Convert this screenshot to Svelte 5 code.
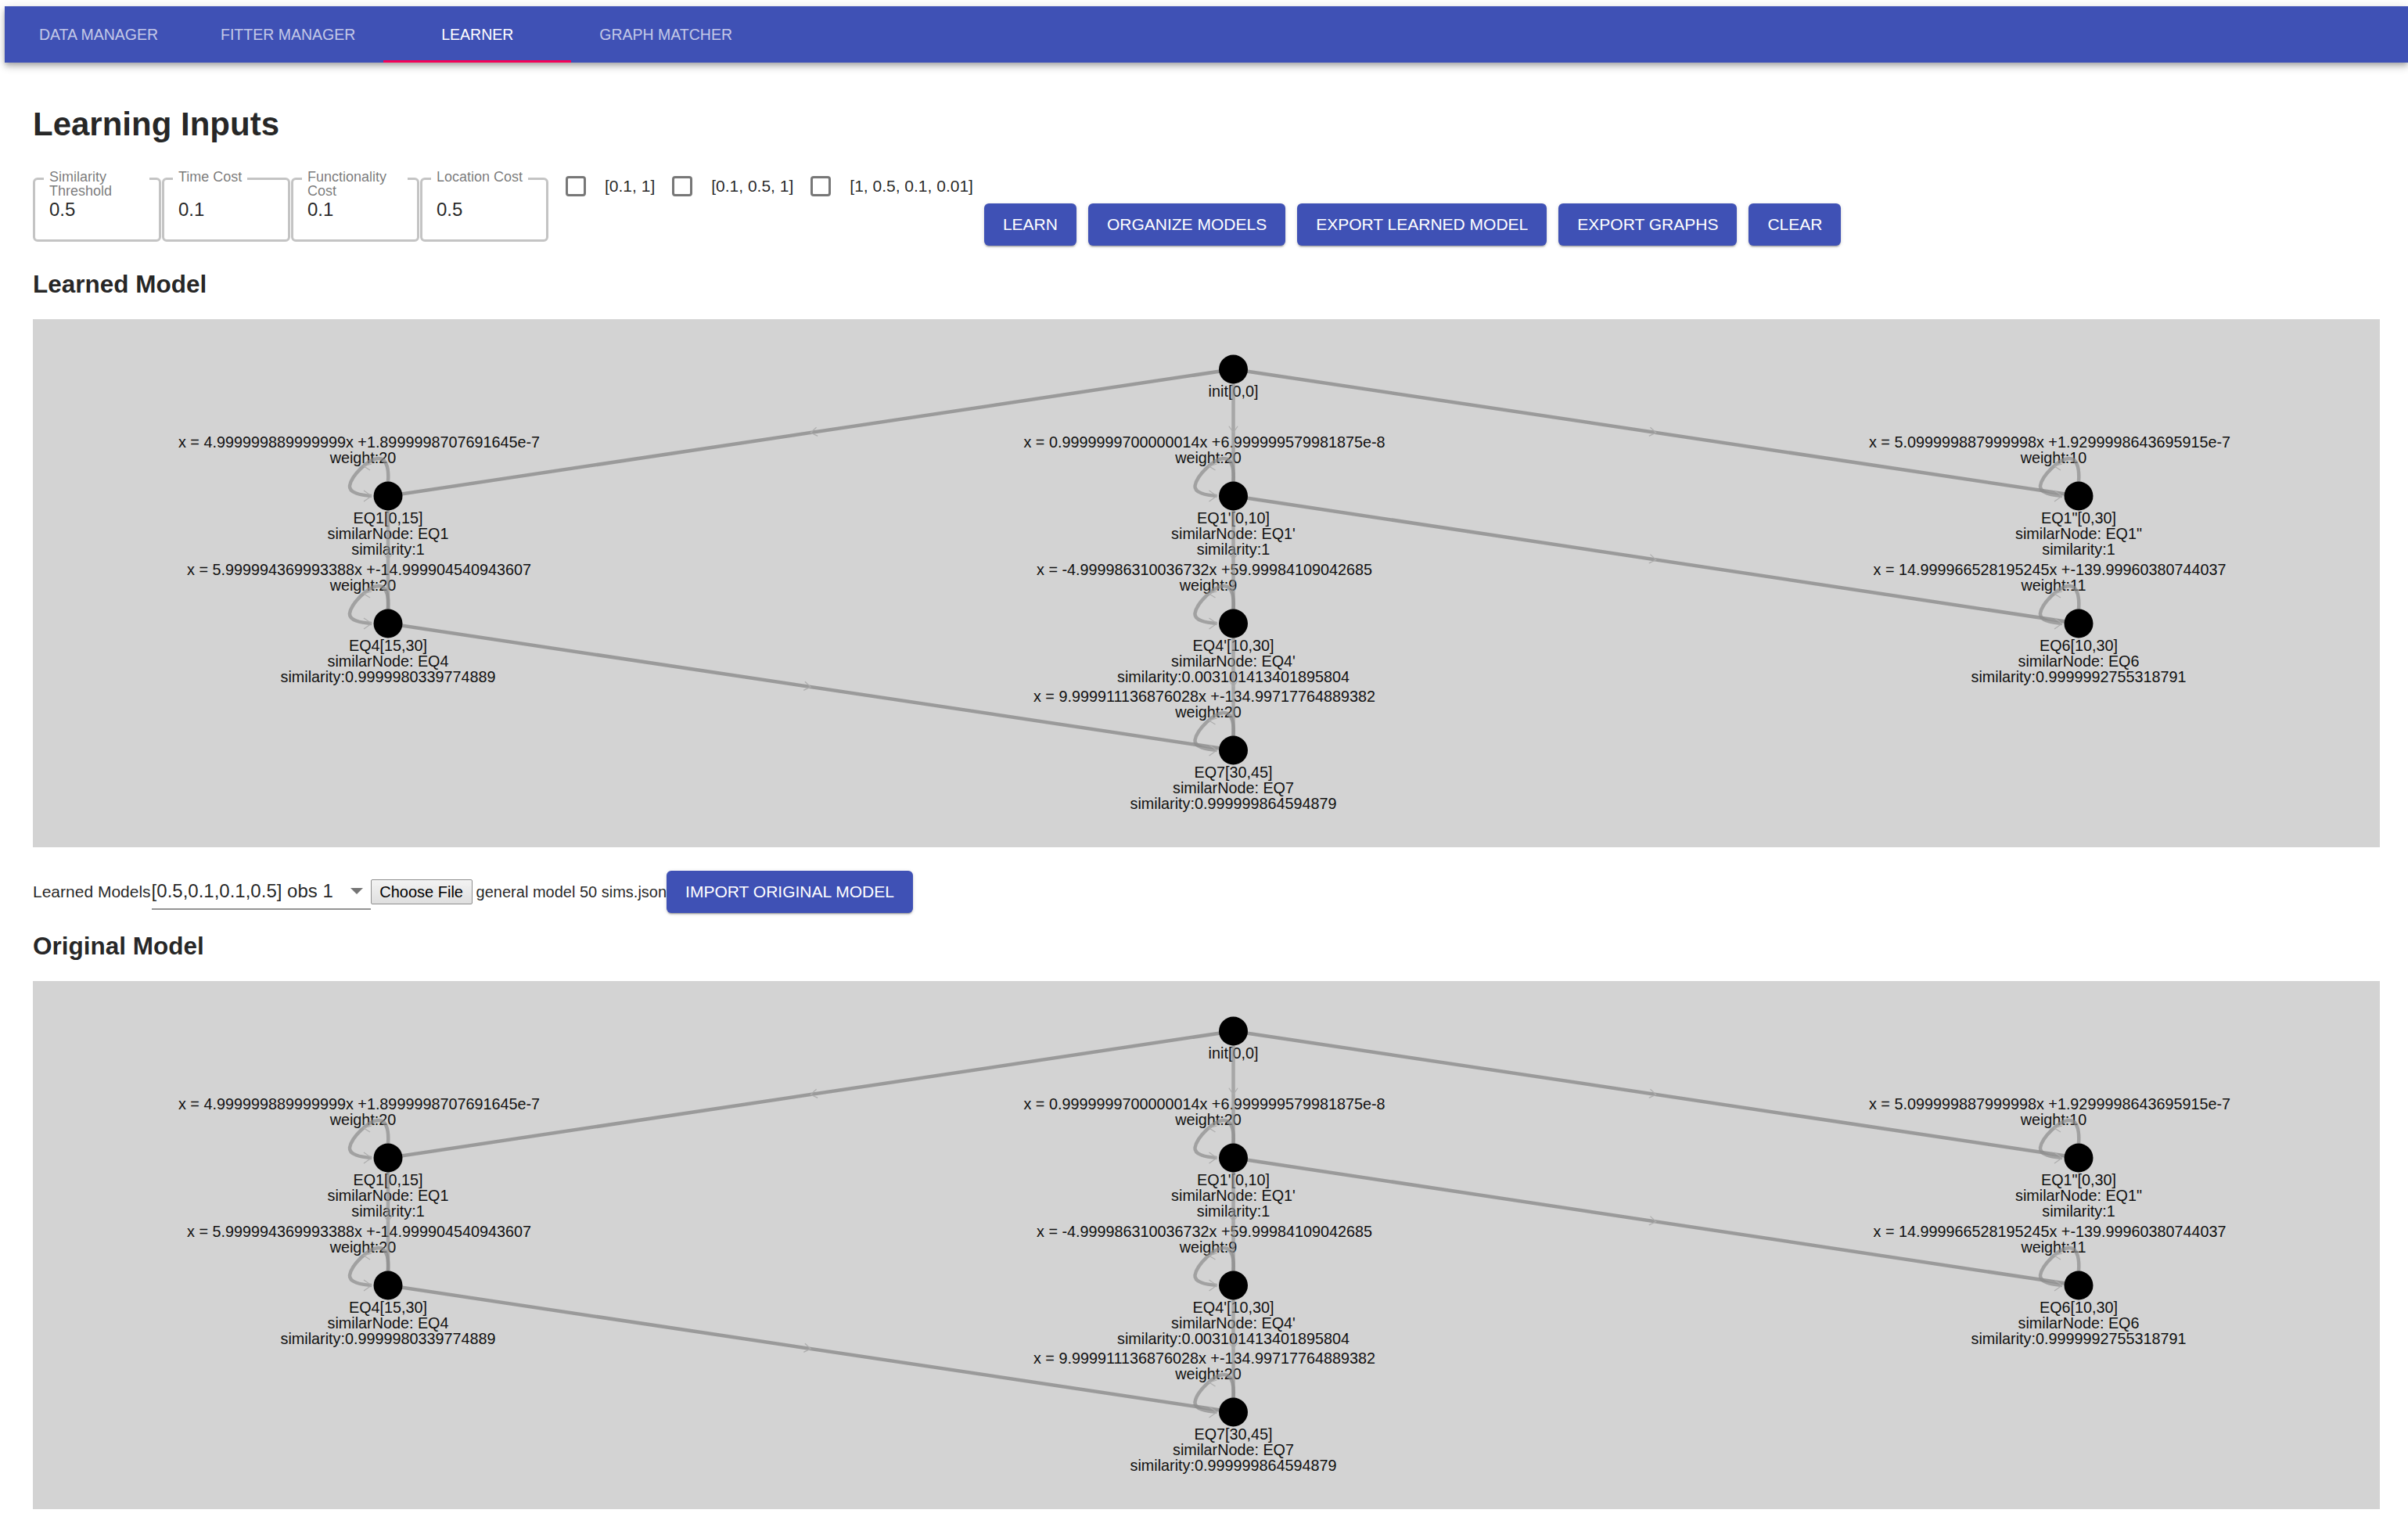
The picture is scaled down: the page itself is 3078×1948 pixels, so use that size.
<script>
  const tabs = [
    { label: 'DATA MANAGER' },
    { label: 'FITTER MANAGER' },
    { label: 'LEARNER', active: true },
    { label: 'GRAPH MATCHER' }
  ];

  const fields = [
    { label: 'Similarity Threshold', value: '0.5' },
    { label: 'Time Cost', value: '0.1' },
    { label: 'Functionality Cost', value: '0.1' },
    { label: 'Location Cost', value: '0.5' }
  ];

  const checks = ['[0.1, 1]', '[0.1, 0.5, 1]', '[1, 0.5, 0.1, 0.01]'];
  const actions = ['LEARN', 'ORGANIZE MODELS', 'EXPORT LEARNED MODEL', 'EXPORT GRAPHS', 'CLEAR'];

  const colX = [454, 1534.5, 2615];
  const rowY = [64, 226, 389, 551];

  const nodes = [
    { id: 'init', x: colX[1], y: rowY[0], lines: ['init[0,0]'] },
    {
      id: 'eq1', x: colX[0], y: rowY[1],
      eq: 'x = 4.999999889999999x +1.8999998707691645e-7', weight: 20,
      lines: ['EQ1[0,15]', 'similarNode: EQ1', 'similarity:1']
    },
    {
      id: 'eq1p', x: colX[1], y: rowY[1],
      eq: 'x = 0.9999999700000014x +6.999999579981875e-8', weight: 20,
      lines: ["EQ1'[0,10]", "similarNode: EQ1'", 'similarity:1']
    },
    {
      id: 'eq1pp', x: colX[2], y: rowY[1],
      eq: 'x = 5.099999887999998x +1.9299998643695915e-7', weight: 10,
      lines: ['EQ1"[0,30]', 'similarNode: EQ1"', 'similarity:1']
    },
    {
      id: 'eq4', x: colX[0], y: rowY[2],
      eq: 'x = 5.999994369993388x +-14.999904540943607', weight: 20,
      lines: ['EQ4[15,30]', 'similarNode: EQ4', 'similarity:0.9999980339774889']
    },
    {
      id: 'eq4p', x: colX[1], y: rowY[2],
      eq: 'x = -4.999986310036732x +59.99984109042685', weight: 9,
      lines: ["EQ4'[10,30]", "similarNode: EQ4'", 'similarity:0.003101413401895804']
    },
    {
      id: 'eq6', x: colX[2], y: rowY[2],
      eq: 'x = 14.999966528195245x +-139.99960380744037', weight: 11,
      lines: ['EQ6[10,30]', 'similarNode: EQ6', 'similarity:0.9999992755318791']
    },
    {
      id: 'eq7', x: colX[1], y: rowY[3],
      eq: 'x = 9.999911136876028x +-134.99717764889382', weight: 20,
      lines: ['EQ7[30,45]', 'similarNode: EQ7', 'similarity:0.999999864594879']
    }
  ];

  const byId = Object.fromEntries(nodes.map((n) => [n.id, n]));
  const links = [
    ['init', 'eq1'], ['init', 'eq1p'], ['init', 'eq1pp'],
    ['eq1', 'eq4'], ['eq1p', 'eq4p'], ['eq1p', 'eq6'],
    ['eq4', 'eq7'], ['eq4p', 'eq7']
  ].map(([a, b]) => ({ from: byId[a], to: byId[b] }));

  const loop = 'M0,-18 C1,-30 0,-48 -12,-48 C-25,-48 -47,-26 -49,-13 C-50,-4 -35,-1 -21,0';

  // small open arrowhead at the middle of an edge
  function midHead({ from, to }) {
    const x = (from.x + to.x) / 2;
    const y = (from.y + to.y) / 2;
    const angle = Math.atan2(to.y - from.y, to.x - from.x);
    const a1 = angle + Math.PI - 0.6;
    const a2 = angle + Math.PI + 0.6;
    const size = 10;
    return `M${x + size * Math.cos(a1)},${y + size * Math.sin(a1)} L${x},${y} L${x + size * Math.cos(a2)},${y + size * Math.sin(a2)}`;
  }
</script>

{#snippet graph()}
  <div class="canvas">
    <svg width="3000" height="675" viewBox="0 0 3000 675">
      {#each nodes as n}
        {#if n.eq}
          <text class="label" x={n.x - 37} y={n.y - 62}>{n.eq}</text>
          <text class="label" x={n.x - 32} y={n.y - 42}>weight:{n.weight}</text>
        {/if}
        {#each n.lines as line, i}
          <text class="label" x={n.x} y={n.y + 35 + i * 20}>{line}</text>
        {/each}
      {/each}

      {#each links as link}
        <line
          class="edge"
          class:soft={link.from.x === link.to.x}
          x1={link.from.x}
          y1={link.from.y}
          x2={link.to.x}
          y2={link.to.y}
        />
        <path class="head" d={midHead(link)} />
      {/each}

      {#each nodes as n}
        {#if n.eq}
          <g transform="translate({n.x} {n.y})">
            <path class="edge self" d={loop} />
            <path class="head" d="M-21,-41 L-31,-38 L-23,-33 M-31,-7 L-21,0 L-31,7" />
          </g>
        {/if}
        <circle cx={n.x} cy={n.y} r="18.5" />
      {/each}
    </svg>
  </div>
{/snippet}

<div class="page">
  <nav class="tabs">
    {#each tabs as tab}
      <div class="tab" class:active={tab.active}>{tab.label}</div>
    {/each}
  </nav>

  <main>
    <h1>Learning Inputs</h1>

    <div class="toolbar">
      <div class="fields">
        {#each fields as f}
          <div class="field">
            <span class="field-label">{f.label}</span>
            <span class="field-value">{f.value}</span>
          </div>
        {/each}
      </div>

      <div class="checks">
        {#each checks as c}
          <div class="check">
            <span class="box"></span>
            <span>{c}</span>
          </div>
        {/each}
      </div>

      <div class="actions">
        {#each actions as a}
          <button class="btn">{a}</button>
        {/each}
      </div>
    </div>

    <h2>Learned Model</h2>
    {@render graph()}

    <div class="imports">
      <span class="models-label">Learned Models</span>
      <div class="select">
        <span>[0.5,0.1,0.1,0.5] obs 1</span>
        <i class="caret"></i>
      </div>
      <button class="file-btn">Choose File</button>
      <span class="file-name">general model 50 sims.json</span>
      <button class="btn">IMPORT ORIGINAL MODEL</button>
    </div>

    <h2 class="second">Original Model</h2>
    {@render graph()}
  </main>
</div>

<style>
  :global(body) {
    margin: 0;
    background: #fff;
  }

  .page {
    padding: 8px 0 0 6px;
    font-family: 'Liberation Sans', Arial, sans-serif;
    color: rgba(0, 0, 0, 0.87);
  }

  .tabs {
    display: flex;
    height: 72px;
    background: #3f51b5;
    box-shadow: 0 3px 6px -1px rgba(0, 0, 0, 0.2), 0 6px 8px 0 rgba(0, 0, 0, 0.14), 0 2px 15px 0 rgba(0, 0, 0, 0.12);
  }

  .tab {
    box-sizing: border-box;
    display: flex;
    align-items: center;
    justify-content: center;
    min-width: 240px;
    padding: 0 36px;
    font-size: 19.5px;
    color: rgba(255, 255, 255, 0.7);
  }

  .tab.active {
    color: #fff;
    border-bottom: 3px solid #f50057;
    padding-top: 3px;
  }

  main {
    padding: 0 36px;
  }

  h1 {
    margin: 55px 0 34px;
    font-size: 42px;
    line-height: 48px;
    font-weight: 700;
  }

  h2 {
    margin: 31px 0 27px;
    font-size: 31.5px;
    line-height: 36px;
    font-weight: 700;
  }

  h2.second {
    margin-top: 24px;
  }

  .toolbar {
    display: flex;
    align-items: flex-start;
    height: 97px;
  }

  .fields {
    display: flex;
    gap: 1px;
    padding-top: 10px;
  }

  .field {
    position: relative;
    box-sizing: border-box;
    width: 164px;
    height: 82px;
    padding: 24px 0 0 18px;
    border: 3px solid #c4c4c4;
    border-radius: 6px;
  }

  .field-label {
    position: absolute;
    top: -13px;
    left: 11px;
    max-width: 121px;
    padding: 0 7px;
    background: #fff;
    font-size: 18px;
    line-height: 18px;
    color: rgba(0, 0, 0, 0.54);
  }

  .field-value {
    display: block;
    font-size: 24px;
    line-height: 28px;
  }

  .checks {
    display: flex;
    gap: 22px;
    margin: 8px 0 0 22px;
  }

  .check {
    display: flex;
    align-items: center;
    gap: 24px;
    height: 26px;
    font-size: 21px;
  }

  .box {
    box-sizing: border-box;
    width: 26px;
    height: 26px;
    border: 3px solid #777;
    border-radius: 4px;
  }

  .actions {
    display: flex;
    gap: 15px;
    margin: 43px 0 0 14px;
  }

  .btn {
    height: 54px;
    padding: 0 24px;
    border: 0;
    border-radius: 6px;
    background: #3f51b5;
    color: #fff;
    font-family: inherit;
    font-size: 21px;
    white-space: nowrap;
    box-shadow: 0 3px 1px -2px rgba(0, 0, 0, 0.2), 0 2px 2px 0 rgba(0, 0, 0, 0.14), 0 1px 5px 0 rgba(0, 0, 0, 0.12);
  }

  .canvas {
    height: 675px;
    background: #d3d3d3;
  }

  svg {
    display: block;
  }

  .label {
    font-size: 19.8px;
    fill: #111;
    text-anchor: middle;
  }

  .edge {
    fill: none;
    stroke: #8c8c8c;
    stroke-opacity: 0.8;
    stroke-width: 4.5;
  }

  .edge.soft {
    stroke-opacity: 0.62;
  }

  .edge.self {
    stroke-opacity: 0.7;
  }

  .head {
    fill: none;
    stroke: #adadad;
    stroke-width: 1.2;
  }

  circle {
    fill: #000;
  }

  .imports {
    display: flex;
    align-items: center;
    height: 54px;
    margin-top: 30px;
  }

  .models-label {
    font-size: 21px;
  }

  .select {
    box-sizing: border-box;
    display: flex;
    align-items: center;
    justify-content: space-between;
    width: 280px;
    height: 46px;
    margin-left: 1px;
    padding-right: 10px;
    border-bottom: 2px solid #949494;
    font-size: 24px;
  }

  .caret {
    width: 0;
    height: 0;
    border-left: 8px solid transparent;
    border-right: 8px solid transparent;
    border-top: 8px solid #757575;
  }

  .file-btn {
    box-sizing: border-box;
    width: 130px;
    height: 32px;
    padding: 0;
    border: 1.5px solid #8f8f8f;
    border-radius: 2px;
    background: linear-gradient(#f3f3f3, #dfdfdf);
    color: #000;
    font-family: inherit;
    font-size: 20px;
  }

  .file-name {
    margin-left: 5px;
    font-size: 20px;
    white-space: nowrap;
  }
</style>
